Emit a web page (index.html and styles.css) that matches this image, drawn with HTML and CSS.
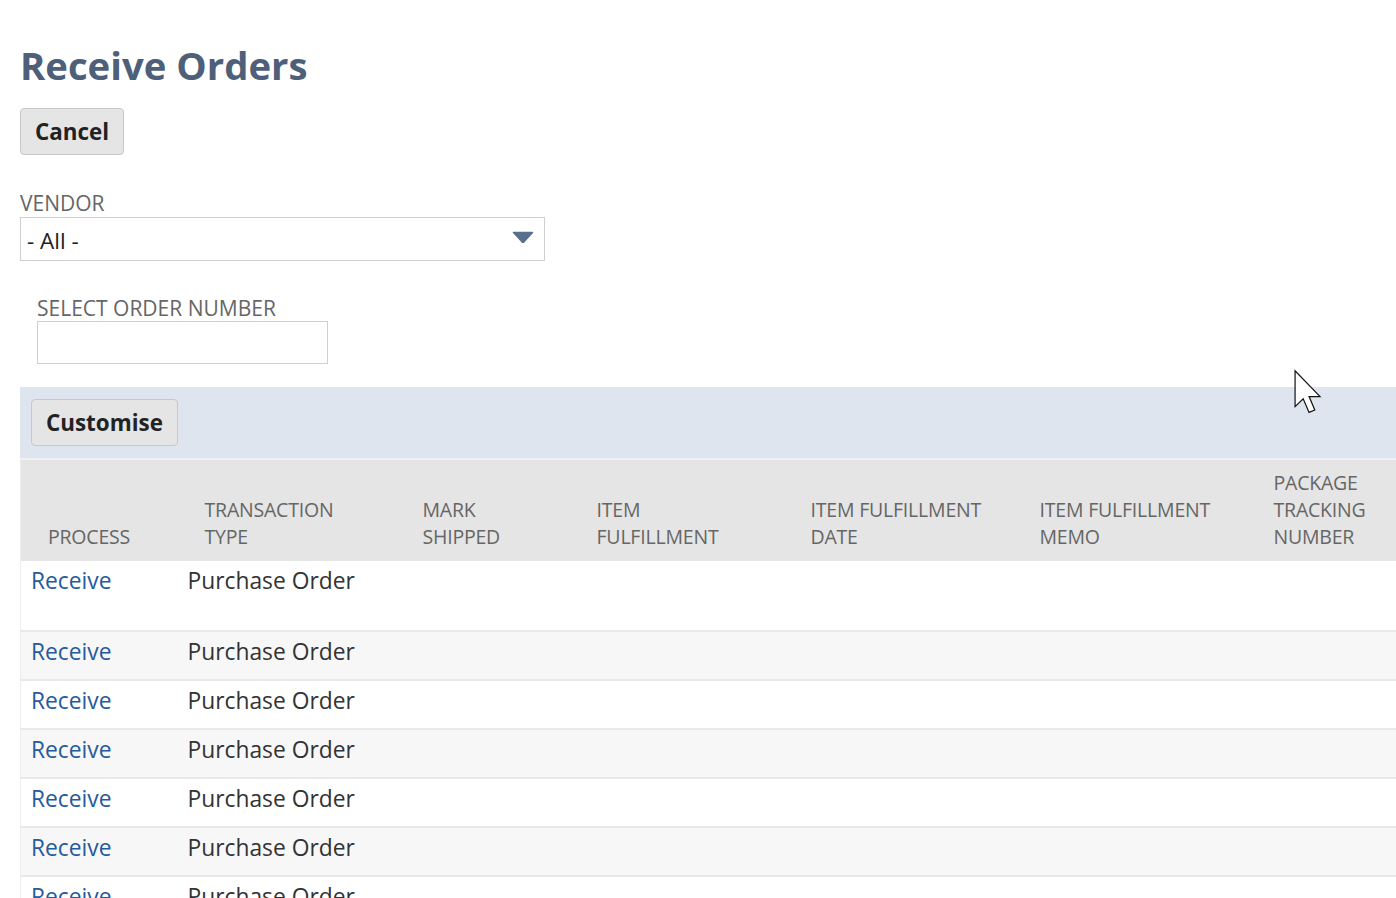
FILE: index.html
```html
<!DOCTYPE html>
<html lang="en">
<head>
<meta charset="utf-8">
<title>Receive Orders</title>
<link rel="stylesheet" href="styles.css">
</head>
<body>
<div class="page">
  <h1 class="title">Receive Orders</h1>
  <div class="actions">
    <button class="btn" type="button">Cancel</button>
  </div>

  <div class="field vendor">
    <label class="field-label">VENDOR</label>
    <div class="select">
      <span class="select-value">- All -</span>
      <svg class="select-arrow" width="22" height="12" viewBox="0 0 22 12"><path d="M1.5 1.5 H20.5 L12.2 10.6 Q11 11.8 9.8 10.6 Z" fill="#5a6f8e" stroke="#5a6f8e" stroke-width="1.5" stroke-linejoin="round"/></svg>
    </div>
  </div>

  <div class="field order">
    <label class="field-label">SELECT ORDER NUMBER</label>
    <div class="text-input"></div>
  </div>

  <div class="band">
    <button class="btn" type="button">Customise</button>
  </div>

  <table class="grid">
    <colgroup>
      <col class="c1"><col class="c2"><col class="c3"><col class="c4"><col class="c5"><col class="c6"><col class="c7">
    </colgroup>
    <thead>
      <tr>
        <th>PROCESS</th>
        <th>TRANSACTION<br>TYPE</th>
        <th>MARK<br>SHIPPED</th>
        <th>ITEM<br>FULFILLMENT</th>
        <th>ITEM FULFILLMENT<br>DATE</th>
        <th>ITEM FULFILLMENT<br>MEMO</th>
        <th>PACKAGE<br>TRACKING<br>NUMBER</th>
      </tr>
    </thead>
    <tbody>
      <tr class="first"><td><a href="#">Receive</a></td><td>Purchase Order</td><td></td><td></td><td></td><td></td><td></td></tr>
      <tr><td><a href="#">Receive</a></td><td>Purchase Order</td><td></td><td></td><td></td><td></td><td></td></tr>
      <tr><td><a href="#">Receive</a></td><td>Purchase Order</td><td></td><td></td><td></td><td></td><td></td></tr>
      <tr><td><a href="#">Receive</a></td><td>Purchase Order</td><td></td><td></td><td></td><td></td><td></td></tr>
      <tr><td><a href="#">Receive</a></td><td>Purchase Order</td><td></td><td></td><td></td><td></td><td></td></tr>
      <tr><td><a href="#">Receive</a></td><td>Purchase Order</td><td></td><td></td><td></td><td></td><td></td></tr>
      <tr><td><a href="#">Receive</a></td><td>Purchase Order</td><td></td><td></td><td></td><td></td><td></td></tr>
    </tbody>
  </table>
</div>

<svg class="cursor" width="30" height="46" viewBox="0 0 13 21"><path d="M0.6 0.8 L0.6 17.2 L4.3 13.6 L7 19.8 L9.6 18.7 L7 12.6 L12 12.6 Z" fill="#fff" stroke="#111" stroke-width="0.55" stroke-linejoin="miter"/></svg>
</body>
</html>
```
FILE: styles.css
```css
html, body {
  margin: 0;
  padding: 0;
  overflow: hidden;
  background: #fff;
}

body {
  font-family: "Open Sans", "DejaVu Sans", sans-serif;
  color: #333;
}

.page {
  padding-left: 20px;
}

.title {
  margin: 43px 0 0 0;
  font-size: 38.3px;
  line-height: 44px;
  font-weight: 700;
  color: #4d5f79;
}

.actions {
  margin-top: 21px;
  display: flex;
}

.btn {
  font-family: "Open Sans", "DejaVu Sans", sans-serif;
  font-size: 22.4px;
  font-weight: 700;
  color: #222;
  background: #e5e5e5;
  border: 1px solid #c8c8c8;
  border-radius: 4px;
  height: 47px;
  line-height: 43px;
  padding: 0 14px;
  margin: 0;
}

.field {
  display: flex;
  flex-direction: column;
  align-items: flex-start;
}

.field-label {
  font-size: 21px;
  line-height: 24px;
  color: #666;
}

.vendor {
  margin-top: 36px;
}

.vendor .field-label {
  margin-bottom: 2px;
}

.select {
  box-sizing: border-box;
  width: 525px;
  height: 44px;
  border: 1px solid #cfcfcf;
  display: flex;
  align-items: center;
  justify-content: space-between;
  padding: 0 10px 0 6px;
}

.select-value {
  font-size: 22.5px;
  color: #222;
  line-height: 28px;
  padding-top: 4px;
}

.select-arrow {
  margin-top: -4px;
}

.order {
  margin-top: 35px;
  padding-left: 17px;
}

.order .field-label {
  margin-bottom: 1px;
}

.text-input {
  box-sizing: border-box;
  width: 291px;
  height: 43px;
  border: 1px solid #cfcfcf;
}

.band {
  margin-top: 23px;
  background: #dfe5ee;
  padding: 12px 11px;
  display: flex;
  border-bottom: 2px solid #eef0f3;
}

.grid {
  border-collapse: collapse;
  table-layout: fixed;
  width: 1400px;
  border-left: 1px solid #eeeeee;
}

.c1 { width: 157px; }
.c2 { width: 218px; }
.c3 { width: 174px; }
.c4 { width: 214px; }
.c5 { width: 229px; }
.c6 { width: 234px; }
.c7 { width: 174px; }

.grid th {
  background: #e5e5e5;
  color: #666;
  font-weight: 400;
  font-size: 19.5px;
  line-height: 27px;
  text-align: left;
  vertical-align: bottom;
  padding: 9px 0 11px 27px;
  white-space: nowrap;
  letter-spacing: -0.2px;
}

.grid td {
  font-size: 22.8px;
  line-height: 28px;
  padding: 6px 0 13px 10px;
  vertical-align: top;
  color: #333;
  white-space: nowrap;
}

.grid tbody tr {
  border-bottom: 2px solid #e9e9e9;
}

.grid tbody tr:nth-child(even) {
  background: #f7f7f7;
}

.grid tbody tr.first td {
  padding-bottom: 35px;
}

.grid a {
  color: #255a9c;
  text-decoration: none;
}

.cursor {
  position: absolute;
  left: 1293px;
  top: 369px;
}
```
